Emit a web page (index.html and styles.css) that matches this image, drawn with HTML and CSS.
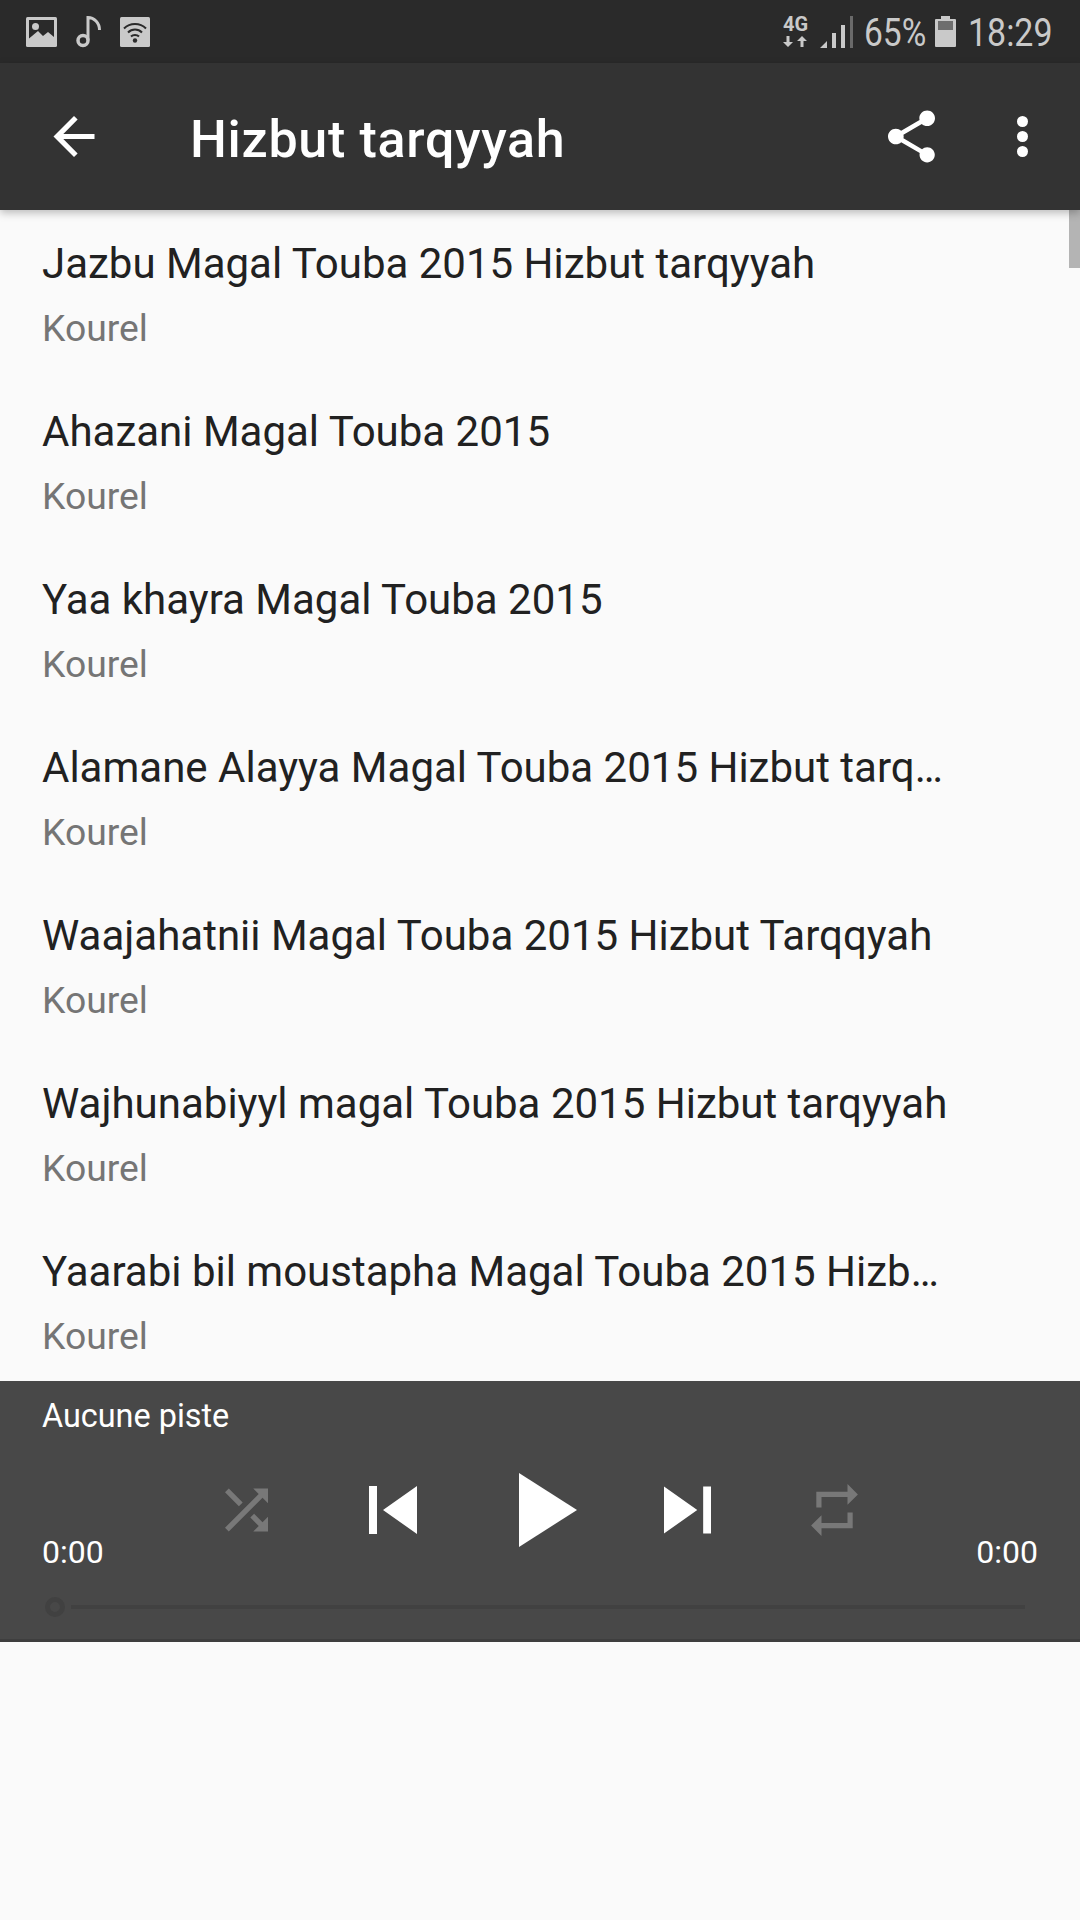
FILE: index.html
```html
<!DOCTYPE html>
<html>
<head>
<meta charset="UTF-8" />
<title>Hizbut tarqyyah</title>
<link rel="stylesheet" href="styles.css">
</head>
<body>
<div class="status">
  <svg class="st-pic" viewBox="0 0 31 30"><rect width="31" height="30" rx="1.5" fill="#c9c9c9"/><path fill="#2a2a2a" d="M3 3h25v17l-6-5-5 4-5-5-9 7.500-0 0z"/><circle cx="9.500" cy="9.500" r="3.500" fill="#c9c9c9"/></svg>
  <svg class="st-note" viewBox="0 0 25 32"><circle cx="7" cy="24.500" r="5" fill="none" stroke="#c9c9c9" stroke-width="3.500"/><path fill="none" stroke="#c9c9c9" stroke-width="3" d="M12 24V1.500c6 0 11.500 5 11.500 12.500"/></svg>
  <svg class="st-wifi" viewBox="0 0 30 30"><rect width="30" height="30" rx="1.500" fill="#c9c9c9"/><g fill="none" stroke="#2a2a2a" stroke-width="2"><path d="M4 11.500c6-6 16-6 22 0"/><path d="M8 15.500c4-4 10-4 14 0"/><path d="M11 19.500c2-2 6-2 8 0"/></g><circle cx="15" cy="23.500" r="2.200" fill="#2a2a2a"/></svg>
  <div class="st-right">
    <div class="st-net">
      <span class="st-4g">4G</span>
      <svg viewBox="0 0 24 11"><path fill="#c9c9c9" d="M3.500 0h3v6H10l-5 5-5-5h3.500zM17.500 11h3V5H24l-5-5-5 5h3.500z"/></svg>
    </div>
    <svg class="st-sig" viewBox="0 0 33 32"><path fill="#c9c9c9" d="M0 32l7-7v7zM12 17h4v15h-4zM21 9h4v23h-4z"/><path fill="#6a6a6a" d="M30 0h3v32h-3z"/></svg>
    <span class="st-txt st-pct">65%</span>
    <svg class="st-batt" viewBox="0 0 21 31"><path fill="#c9c9c9" d="M6 0h9v3h5a1 1 0 0 1 1 1v26a1 1 0 0 1-1 1H1a1 1 0 0 1-1-1V4a1 1 0 0 1 1-1h5z"/><path fill="#6e6e6e" d="M3 5h15v9H3z"/></svg>
    <span class="st-txt st-time">18:29</span>
  </div>
</div>

<div class="bar">
  <svg class="bar-back" viewBox="4 4 16 16"><path fill="#fff" d="M20 11H7.830l5.590-5.590L12 4l-8 8 8 8 1.410-1.410L7.830 13H20v-2z"/></svg>
  <div class="bar-title">Hizbut tarqyyah</div>
  <svg class="bar-share" viewBox="3 2 18 20"><path fill="#fff" d="M18 16.080c-.76 0-1.440.3-1.960.77L8.910 12.700c.05-.23.09-.46.09-.7s-.04-.47-.09-.7l7.050-4.110c.54.5 1.250.81 2.040.81 1.660 0 3-1.340 3-3s-1.340-3-3-3-3 1.340-3 3c0 .24.04.47.09.7L8.040 9.810C7.500 9.310 6.790 9 6 9c-1.660 0-3 1.340-3 3s1.340 3 3 3c.79 0 1.500-.31 2.040-.81l7.120 4.160c-.05.21-.08.43-.08.65 0 1.610 1.310 2.920 2.920 2.920 1.610 0 2.920-1.310 2.920-2.920s-1.310-2.920-2.920-2.920z"/></svg>
  <div class="bar-more"><i></i><i></i><i></i></div>
</div>

<div class="list">
  <div class="thumb"></div>
  <div class="row"><div class="row-name">Jazbu Magal Touba 2015 Hizbut tarqyyah</div><div class="row-sub">Kourel</div></div>
  <div class="row"><div class="row-name">Ahazani Magal Touba 2015</div><div class="row-sub">Kourel</div></div>
  <div class="row"><div class="row-name">Yaa khayra Magal Touba 2015</div><div class="row-sub">Kourel</div></div>
  <div class="row"><div class="row-name">Alamane Alayya Magal Touba 2015 Hizbut tarq…</div><div class="row-sub">Kourel</div></div>
  <div class="row"><div class="row-name">Waajahatnii Magal Touba 2015 Hizbut Tarqqyah</div><div class="row-sub">Kourel</div></div>
  <div class="row"><div class="row-name">Wajhunabiyyl magal Touba 2015 Hizbut tarqyyah</div><div class="row-sub">Kourel</div></div>
  <div class="row"><div class="row-name">Yaarabi bil moustapha Magal Touba 2015 Hizb…</div><div class="row-sub">Kourel</div></div>
</div>

<div class="player">
  <div class="pl-name">Aucune piste</div>
  <div class="pl-mid">
    <span class="pl-time">0:00</span>
    <div class="pl-ctrl">
      <svg class="ic-shuffle" viewBox="4 4 16 16"><path fill="#787878" d="M10.590 9.170L5.410 4 4 5.410l5.170 5.170 1.420-1.410zM14.500 4l2.040 2.040L4 18.590 5.410 20 17.960 7.460 20 9.500V4h-5.500zm.33 9.410l-1.410 1.410 3.130 3.130L14.500 20H20v-5.500l-2.040 2.040-3.130-3.130z"/></svg>
      <svg class="ic-prev" viewBox="6 6 12 12"><path fill="#fff" d="M6 6h2v12H6zm3.500 6l8.500 6V6z"/></svg>
      <svg class="ic-play" viewBox="8 5 11 14"><path fill="#fff" d="M8 5v14l11-7z"/></svg>
      <svg class="ic-next" viewBox="6 6 12 12"><path fill="#fff" d="M6 18l8.500-6L6 6v12zM16 6v12h2V6h-2z"/></svg>
      <svg class="ic-repeat" viewBox="3 2 18 20"><path fill="#787878" d="M7 7h10v3l4-4-4-4v3H5v6h2V7zm10 10H7v-3l-4 4 4 4v-3h12v-6h-2v4z"/></svg>
    </div>
    <span class="pl-time pl-end">0:00</span>
  </div>
  <div class="pl-seek">
    <div class="pl-knob"></div>
    <div class="pl-track"></div>
  </div>
</div>
</body>
</html>
```
FILE: styles.css
```css
* {
  box-sizing: border-box;
}

body {
  margin: 0;
  height: 1920px;
  overflow: hidden;
  background: #fafafa;
  font-family: Roboto, sans-serif;
}

svg {
  display: block;
  flex: none;
}

/* status bar */
.status {
  display: flex;
  align-items: center;
  height: 63px;
  padding-left: 26px;
  background: #2a2a2a;
}

.st-pic { width: 31px; height: 30px; }
.st-note { width: 25px; height: 32px; margin-left: 19px; }
.st-wifi { width: 30px; height: 30px; margin-left: 19px; }

.st-right {
  display: flex;
  align-items: center;
  margin-left: auto;
  padding-right: 29px;
}

.st-net { width: 25px; margin-right: 12px; }
.st-net svg { width: 24px; height: 11px; margin-top: 4px; }

.st-4g {
  display: block;
  font-size: 20px;
  font-weight: 700;
  line-height: 16px;
  color: #c9c9c9;
}

.st-sig { width: 33px; height: 32px; margin-right: 11px; }
.st-batt { width: 21px; height: 31px; margin: 0 12px 0 9px; }

.st-txt {
  display: block;
  margin-top: 4px;
  font-size: 39px;
  line-height: 59px;
  color: #c9c9c9;
  transform-origin: left;
}

.st-pct { width: 62px; transform: scaleX(0.86); }
.st-time { width: 83px; transform: scaleX(0.87); }

/* app bar */
.bar {
  position: relative;
  z-index: 2;
  display: flex;
  align-items: center;
  height: 147px;
  background: #333;
  box-shadow: 0 3px 8px rgba(0, 0, 0, 0.25);
}

.bar-back { width: 42px; height: 41px; margin-left: 53px; }

.bar-title {
  margin: 6px 0 0 95px;
  font-size: 52px;
  font-weight: 500;
  letter-spacing: 0.7px;
  color: #fff;
}

.bar-share { width: 47px; height: 53px; margin-left: auto; }

.bar-more {
  display: flex;
  flex-direction: column;
  gap: 4px;
  margin: 0 52px 0 82px;
}

.bar-more i {
  display: block;
  width: 11px;
  height: 11px;
  border-radius: 50%;
  background: #fff;
}

/* track list */
.list {
  position: relative;
  height: 1171px;
  overflow: hidden;
  padding-top: 11px;
}

.thumb {
  position: absolute;
  top: 0;
  right: 0;
  width: 11px;
  height: 58px;
  background: #b4b4b4;
}

.row {
  height: 168px;
  padding: 15px 0 0 42px;
}

.row-name {
  white-space: nowrap;
  font-size: 42px;
  line-height: 56px;
  color: #212121;
}

.row-sub {
  margin-top: 11px;
  font-size: 37.3px;
  line-height: 50px;
  color: #757575;
}

/* player */
.player {
  height: 261px;
  padding: 0 42px;
  background: #484848;
  border-bottom: 3px solid #3e3e3e;
}

.pl-name {
  padding-top: 16px;
  font-size: 32.4px;
  line-height: 38px;
  color: #fff;
}

.pl-mid {
  display: flex;
  height: 98px;
  margin-top: 38px;
}

.pl-time {
  align-self: flex-end;
  font-size: 32px;
  line-height: 38px;
  color: #fff;
}

.pl-end { margin-left: auto; }

.pl-ctrl {
  display: flex;
  align-items: center;
  height: 74px;
  margin-left: 121px;
}

.ic-shuffle { width: 43px; height: 44px; }
.ic-prev { width: 48px; height: 48px; margin-left: 101px; }
.ic-play { width: 58px; height: 74px; margin-left: 102px; }
.ic-next { width: 47px; height: 48px; margin-left: 87px; }
.ic-repeat { width: 47px; height: 52px; margin-left: 100px; }

.pl-seek {
  display: flex;
  align-items: center;
  margin-top: 26px;
}

.pl-knob {
  width: 20px;
  height: 20px;
  margin-left: 3px;
  border: 5px solid #414141;
  border-radius: 50%;
}

.pl-track {
  width: 954px;
  height: 4px;
  margin-left: 6px;
  background: #414141;
}
```
